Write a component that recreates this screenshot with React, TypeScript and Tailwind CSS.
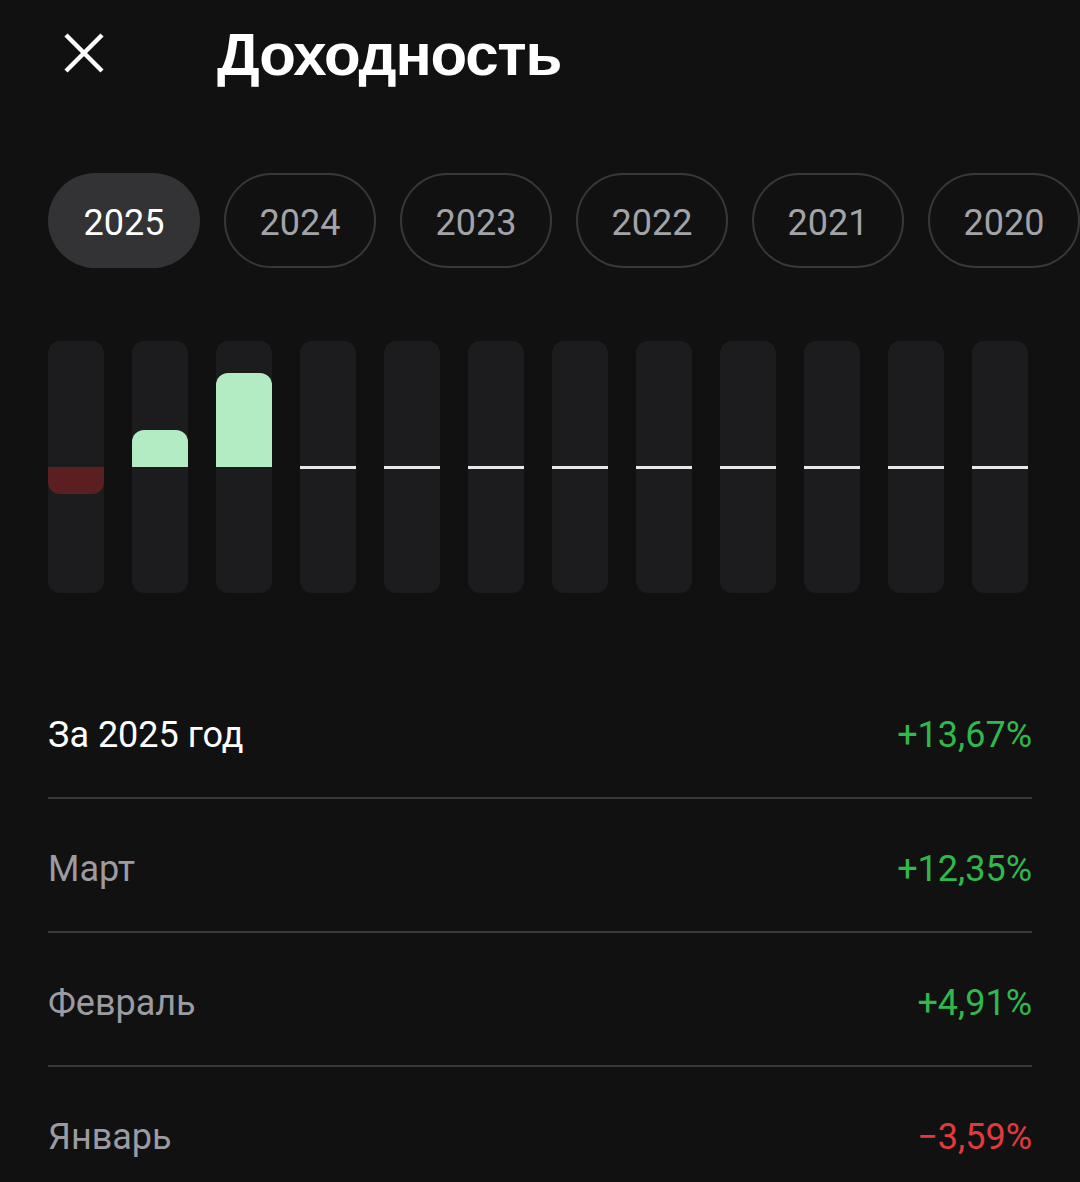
import React from "react";

const years = ["2025", "2024", "2023", "2022", "2021", "2020"];
const bars: number[] = [-27, 37, 94, 0, 0, 0, 0, 0, 0, 0, 0, 0];
const rows = [
  { label: "За 2025 год", value: "+13,67%", main: true, pos: true },
  { label: "Март", value: "+12,35%", main: false, pos: true },
  { label: "Февраль", value: "+4,91%", main: false, pos: true },
  { label: "Январь", value: "−3,59%", main: false, pos: false },
];

export default function App() {
  return (
    <div
      className="w-[1080px] h-[1182px] overflow-hidden bg-[#111112] text-white"
      style={{ fontFamily: "Roboto, 'Noto Sans', sans-serif" }}
    >
      {/* Header */}
      <div className="h-[106px] flex items-center pl-[63px]">
        <svg width="42" height="42" viewBox="0 0 42 42" className="shrink-0">
          <path d="M3 3 L39 39 M39 3 L3 39" stroke="#ffffff" strokeWidth="4.5" strokeLinecap="butt" />
        </svg>
        <h1
          className="ml-[112px] mt-[4px] text-[60px] leading-[60px] font-bold tracking-[-1.2px]"
          style={{ fontFamily: "'Liberation Sans', Arial, sans-serif" }}
        >
          Доходность
        </h1>
      </div>

      {/* Year pills */}
      <div className="mt-[67px] flex gap-[24px] pl-[48px]">
        {years.map((y, i) => (
          <div
            key={y}
            className={
              i === 0
                ? "shrink-0 w-[152px] h-[95px] pt-[4px] rounded-full bg-[#333335] flex items-center justify-center text-[36px] text-white"
                : "shrink-0 w-[152px] h-[95px] pt-[4px] rounded-full border-2 border-[#38383a] flex items-center justify-center text-[36px] text-[#a3a3a8]"
            }
          >
            {y}
          </div>
        ))}
      </div>

      {/* Chart */}
      <div className="mt-[73px] flex gap-[28px] pl-[48px]">
        {bars.map((v, i) => (
          <div key={i} className="relative w-[56px] h-[252px] rounded-[12px] bg-[#1c1c1e] overflow-hidden flex flex-col">
            <div className="h-[126px] flex flex-col justify-end">
              {v > 0 && <div className="w-full rounded-t-[12px] bg-[#b3ebc3]" style={{ height: v }} />}
            </div>
            <div className="h-[126px] flex flex-col justify-start">
              {v < 0 && <div className="w-full rounded-b-[12px] bg-[#5c1f21]" style={{ height: -v }} />}
            </div>
            {v === 0 && <div className="absolute left-0 right-0 top-[125px] h-[3px] bg-[#e8e8e8]" />}
          </div>
        ))}
      </div>

      {/* Rows */}
      <div className="mt-[72px] px-[48px]">
        {rows.map((r, i) => (
          <div
            key={r.label}
            className={
              "flex items-center justify-between pt-[48px] pb-[40px] " +
              (i < rows.length - 1 ? "border-b-2 border-[#38383a]" : "")
            }
          >
            <span className={"text-[36px] leading-[44px] " + (r.main ? "text-white" : "text-[#9b9ba1]")}>{r.label}</span>
            <span className={"text-[36px] leading-[44px] " + (r.pos ? "text-[#30b84a]" : "text-[#e03a3c]")}>{r.value}</span>
          </div>
        ))}
      </div>
    </div>
  );
}
